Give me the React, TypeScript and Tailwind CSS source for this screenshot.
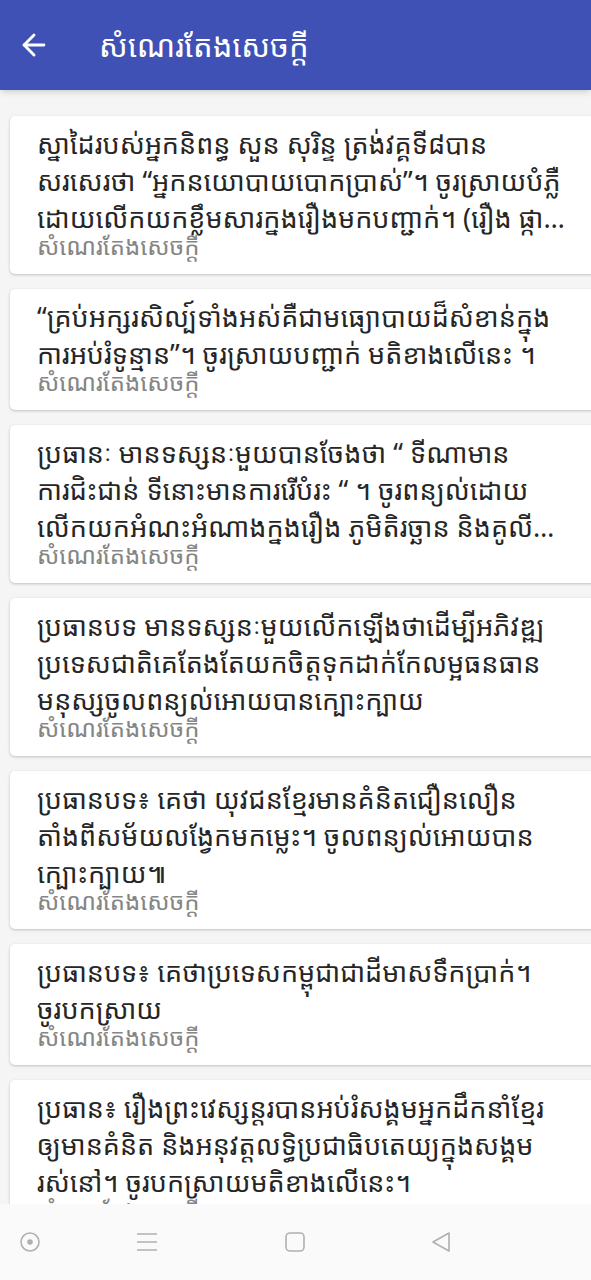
import { ArrowLeft } from 'lucide-react';

const items: string[] = [
  'ស្នាដៃរបស់អ្នកនិពន្ធ សួន សុរិន្ទ ត្រង់វគ្គទី៨បាន សរសេរថា “អ្នកនយោបាយបោកប្រាស់”។ ចូរស្រាយបំភ្លឺដោយលើកយកខ្លឹមសារក្នុងរឿងមកបញ្ជាក់។ (រឿង ផ្កាស្រពោន)',
  '“គ្រប់អក្សរសិល្ប៍ទាំងអស់គឺជាមធ្យោបាយដ៏សំខាន់ក្នុងការអប់រំទូន្មាន”។ ចូរស្រាយបញ្ជាក់ មតិខាងលើនេះ ។',
  'ប្រធានៈ មានទស្សនៈមួយបានចែងថា “ ទីណាមាន ការជិះជាន់ ទីនោះមានការរើបំរះ “ ។  ចូរពន្យល់ដោយលើកយកអំណះអំណាងក្នុងរឿង ភូមិតិរច្ឆាន និងគូលីចិនជាមួយគ្នា',
  'ប្រធានបទ មានទស្សនៈមួយលើកឡើងថាដើម្បីអភិវឌ្ឍប្រទេសជាតិគេតែងតែយកចិត្តទុកដាក់កែលម្អធនធានមនុស្សចូលពន្យល់អោយបានក្បោះក្បាយ',
  'ប្រធានបទ៖ គេថា យុវជនខ្មែរមានគំនិតជឿនលឿន តាំងពីសម័យលង្វែកមកម្លេះ។ ចូលពន្យល់អោយបានក្បោះក្បាយ៕',
  'ប្រធានបទ៖ គេថាប្រទេសកម្ពុជាជាដីមាសទឹកប្រាក់។ ចូរបកស្រាយ',
  'ប្រធាន៖ រឿងព្រះវេស្សន្តរបានអប់រំសង្គមអ្នកដឹកនាំខ្មែរ\nឲ្យមានគំនិត និងអនុវត្តលទ្ធិប្រជាធិបតេយ្យក្នុងសង្គមរស់នៅ។ ចូរបកស្រាយមតិខាងលើនេះ។',
];

const category = 'សំណេរតែងសេចក្តី';

export default function App() {
  return (
    <div
      className="flex flex-col h-[1280px] w-[591px] bg-[#f5f5f5] overflow-hidden"
      style={{ fontFamily: '"Noto Sans Khmer", "Khmer OS", Roboto, "Noto Sans", sans-serif' }}
    >
      {/* APP BAR */}
      <div className="flex items-center h-[90px] shrink-0 bg-[#3f51b5] shadow-md z-10">
        <ArrowLeft className="ml-[17px] text-white" size={34} strokeWidth={2} />
        <h1 className="ml-[48px] text-[31px] text-white leading-none">{category}</h1>
      </div>

      {/* LIST */}
      <div className="flex-1 overflow-hidden pt-[26px]">
        {items.map((text, i) => (
          <div
            key={i}
            className="ml-[10px] mr-[-10px] mb-[15px] bg-white rounded-[5px] shadow-[0_1px_3px_rgba(0,0,0,0.22)] pl-[27px] pr-[33px] pt-[9px] pb-[14px]"
          >
            <p className="text-[27px] leading-[37px] text-[#262626] line-clamp-3 whitespace-pre-line">{text}</p>
            <p className="mt-[-4px] text-[24px] leading-[28px] text-[#858585]">{category}</p>
          </div>
        ))}
      </div>

      {/* SYSTEM NAV */}
      <div className="flex items-center h-[76px] shrink-0 bg-[#fafafa] text-[#b0b0b0]">
        <div className="w-[60px] flex justify-center">
          <svg width="24" height="24" viewBox="0 0 24 24" fill="none" stroke="currentColor" strokeWidth="1.6">
            <circle cx="12" cy="12" r="9" />
            <circle cx="12" cy="12" r="2" fill="currentColor" />
          </svg>
        </div>
        <div className="ml-[57px] w-[60px] flex justify-center">
          <svg width="24" height="24" viewBox="0 0 24 24" fill="none" stroke="currentColor" strokeWidth="1.6">
            <path d="M2 4h20M2 12h20M2 20h20" />
          </svg>
        </div>
        <div className="ml-[88px] w-[60px] flex justify-center">
          <svg width="24" height="24" viewBox="0 0 24 24" fill="none" stroke="currentColor" strokeWidth="1.6">
            <rect x="3" y="3" width="18" height="18" rx="4" />
          </svg>
        </div>
        <div className="ml-[86px] w-[60px] flex justify-center">
          <svg width="24" height="24" viewBox="0 0 24 24" fill="none" stroke="currentColor" strokeWidth="1.6" strokeLinejoin="round">
            <path d="M20 3 4 12l16 9Z" />
          </svg>
        </div>
      </div>
    </div>
  );
}
